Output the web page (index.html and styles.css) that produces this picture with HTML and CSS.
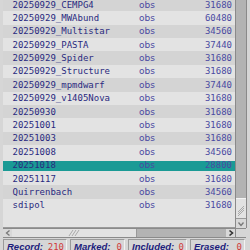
FILE: index.html
```html
<!DOCTYPE html>
<html lang="en">
<head>
    <meta charset="UTF-8">
    <title>Runs</title>
    <link rel="stylesheet" href="styles.css">
</head>
<body>
  <div class="window">
    <div class="main">
      <div class="list">
        <div class="rows">
          <div class="row"><span class="name">20250929_CEMPG4</span><span class="type">obs</span><span class="num">31680</span></div>
          <div class="row"><span class="name">20250929_MWAbund</span><span class="type">obs</span><span class="num">60480</span></div>
          <div class="row"><span class="name">20250929_Multistar</span><span class="type">obs</span><span class="num">34560</span></div>
          <div class="row"><span class="name">20250929_PASTA</span><span class="type">obs</span><span class="num">37440</span></div>
          <div class="row"><span class="name">20250929_Spider</span><span class="type">obs</span><span class="num">31680</span></div>
          <div class="row"><span class="name">20250929_Structure</span><span class="type">obs</span><span class="num">31680</span></div>
          <div class="row"><span class="name">20250929_mpmdwarf</span><span class="type">obs</span><span class="num">37440</span></div>
          <div class="row"><span class="name">20250929_v1405Nova</span><span class="type">obs</span><span class="num">31680</span></div>
          <div class="row"><span class="name">20250930</span><span class="type">obs</span><span class="num">31680</span></div>
          <div class="row"><span class="name">20251001</span><span class="type">obs</span><span class="num">31680</span></div>
          <div class="row"><span class="name">20251003</span><span class="type">obs</span><span class="num">31680</span></div>
          <div class="row"><span class="name">20251008</span><span class="type">obs</span><span class="num">34560</span></div>
          <div class="row selected"><span class="name">20251018</span><span class="type">obs</span><span class="num">28800</span></div>
          <div class="row"><span class="name">20251117</span><span class="type">obs</span><span class="num">31680</span></div>
          <div class="row"><span class="name">Quirrenbach</span><span class="type">obs</span><span class="num">34560</span></div>
          <div class="row"><span class="name">sdipol</span><span class="type">obs</span><span class="num">31680</span></div>
        </div>
      </div>
      <div class="vscroll">
        <div class="vtrack"></div>
        <div class="vthumb">
          <svg width="8" height="16" viewBox="0 0 8 16"><path d="M1 11 L7 5 M1 13 L7 7 M1 15 L7 9" stroke="#9a9a9a" stroke-width="0.8" fill="none"/></svg>
        </div>
        <div class="vbtn">
          <svg width="8" height="8" viewBox="0 0 8 8"><path d="M1.5 2.5 L4 5.5 L6.5 2.5" stroke="#777" stroke-width="1.3" fill="none"/></svg>
        </div>
      </div>
    </div>
    <div class="hscroll">
      <div class="hbtn">
        <svg width="8" height="8" viewBox="0 0 8 8"><path d="M5.5 1.5 L2.5 4 L5.5 6.5" stroke="#777" stroke-width="1.3" fill="none"/></svg>
      </div>
      <div class="hthumb">
        <svg width="16" height="8" viewBox="0 0 16 8"><path d="M3 7 L7 1 M6 7 L10 1 M9 7 L13 1" stroke="#9a9a9a" stroke-width="0.8" fill="none"/></svg>
      </div>
      <div class="htrack"></div>
      <div class="hbtn">
        <svg width="8" height="8" viewBox="0 0 8 8"><path d="M2.5 1.5 L5.5 4 L2.5 6.5" stroke="#333" stroke-width="1.6" fill="none"/></svg>
      </div>
      <div class="corner"></div>
    </div>
    <div class="status">
      <div class="cell"><span class="label">Record:</span><span class="value">210</span></div>
      <div class="cell"><span class="label">Marked:</span><span class="value">0</span></div>
      <div class="cell"><span class="label">Included:</span><span class="value">0</span></div>
      <div class="cell"><span class="label">Erased:</span><span class="value">0</span></div>
    </div>
  </div>
</body>
</html>
```

FILE: styles.css
```css
body {
  margin: 0;
  overflow: hidden;
  background: #d6d6d6;
}

.window {
  width: 250px;
  height: 250px;
  padding-left: 3px;
  box-sizing: border-box;
  display: flex;
  flex-direction: column;
}

.main {
  display: flex;
  height: 228px;
}

.list {
  width: 232px;
  height: 227px;
  overflow: hidden;
  background: #e3e3e3;
  border-bottom: 1px solid #9a9a9a;
}

.rows {
  margin-top: -2.2px;
}

.row {
  display: flex;
  align-items: center;
  height: 13.4px;
  padding: 0 3px 0 9.5px;
  font-family: "DejaVu Sans Mono", monospace;
  font-size: 9px;
  color: #2a2a80;
}

.row:nth-child(odd) {
  background: #d4d4d4;
}

.row.selected {
  background: #1a9a95;
  box-shadow: inset 0 2px 0 #e3e3e3, inset 0 -1px 0 #e3e3e3;
}

.name {
  width: 126.5px;
}

.type {
  font-family: "DejaVu Sans", sans-serif;
  color: #4a4aa2;
  flex: 1;
}

.num {
  color: #4a4aa2;
}

.vscroll {
  width: 10px;
  height: 228px;
  margin-left: 0;
  border-left: 1px solid #8a8a8a;
  border-right: 1px solid #8a8a8a;
  display: flex;
  flex-direction: column;
  background: #b3b3b3;
}

.vtrack {
  flex: 1;
}

.vthumb {
  height: 19px;
  background: #e2e2e2;
  border-top: 1px solid #f4f4f4;
  border-bottom: 1px solid #999;
  display: flex;
  align-items: center;
  justify-content: center;
}

.vbtn {
  height: 9px;
  background: #d8d8d8;
  display: flex;
  align-items: center;
  justify-content: center;
}

.hscroll {
  display: flex;
  height: 10px;
  margin-top: 0;
  background: #b3b3b3;
  border-top: 1px solid #8a8a8a;
  border-bottom: 1px solid #8a8a8a;
  width: 243px;
  box-sizing: border-box;
}

.hbtn {
  width: 9px;
  background: #d8d8d8;
  display: flex;
  align-items: center;
  justify-content: center;
}

.hthumb {
  width: 124px;
  background: #e2e2e2;
  border-right: 1px solid #999;
  display: flex;
  align-items: center;
  justify-content: center;
}

.htrack {
  flex: 1;
}

.corner {
  width: 10px;
  background: #d6d6d6;
  border-left: 1px solid #8a8a8a;
}

.status {
  display: grid;
  grid-template-columns: 64px 55px 59px 55px;
  gap: 3px;
  margin-top: 1px;
}

.cell {
  display: flex;
  justify-content: space-between;
  align-items: baseline;
  height: 14px;
  padding: 1px 2px 0 3px;
  border-top: 1px solid #9a9a9a;
  border-left: 1px solid #9a9a9a;
  border-right: 1px solid #f2f2f2;
  box-sizing: border-box;
  line-height: 11px;
}

.label {
  font-family: "Liberation Sans", sans-serif;
  font-size: 9.5px;
  font-weight: bold;
  font-style: italic;
  color: #1c1c7c;
}

.value {
  font-family: "DejaVu Sans Mono", monospace;
  font-size: 9px;
  color: #d03a3a;
}
```
